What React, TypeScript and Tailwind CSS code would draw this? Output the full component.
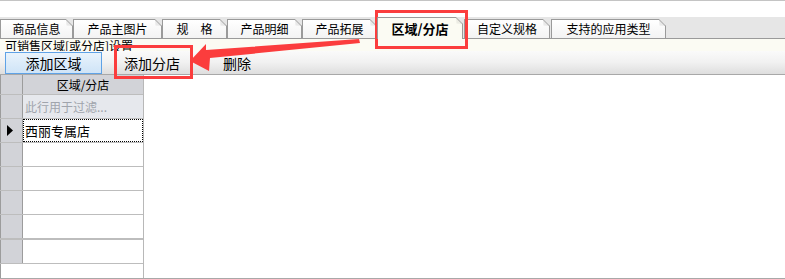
import React from "react";

const tabs: { label: string; w: string; ml: string; active?: boolean }[] = [
  { label: "商品信息", w: "w-[73px]", ml: "" },
  { label: "产品主图片", w: "w-[89px]", ml: "" },
  { label: "规　格", w: "w-[65px]", ml: "" },
  { label: "产品明细", w: "w-[75px]", ml: "" },
  { label: "产品拓展", w: "w-[75px]", ml: "" },
  { label: "区域/分店", w: "w-[86px]", ml: "", active: true },
  { label: "自定义规格", w: "w-[86px]", ml: "ml-px" },
  { label: "支持的应用类型", w: "w-[115px]", ml: "ml-px" },
];

function Fold({ active }: { active?: boolean }) {
  return (
    <svg
      className="absolute -top-px -right-px"
      width="7"
      height="7"
      viewBox="0 0 7 7"
    >
      <polygon points="0,0 7,0 7,7" fill="#e6e6e6" />
      <polygon points="0,0 0.5,6.5 7,7" fill={active ? "#ecece4" : "#e9e9e9"} />
      <line x1="0" y1="0.5" x2="6.5" y2="7" stroke="#9a9a9a" strokeWidth="1" />
    </svg>
  );
}

export default function App() {
  const font = { fontFamily: '"Noto Sans CJK SC", "Noto Sans", sans-serif' };
  const rows = [
    { h: "h-[24px] border-b", selected: true },
    { h: "h-[24px] border-b" },
    { h: "h-[24px] border-b" },
    { h: "h-[24px] border-b" },
    { h: "h-[25px] border-b-2" },
    { h: "h-[24px] border-b" },
  ];
  return (
    <div
      className="relative w-[785px] h-[279px] overflow-hidden bg-white text-black"
      style={font}
    >
      <div className="h-px bg-[#c4c4c4]" />
      <div className="h-[16px] bg-white" />
      {/* tab strip */}
      <div className="flex h-[22px] items-end border-b border-[#9a9a9a] bg-[#e6e6e6]">
        {tabs.map((t) =>
          t.active ? (
            <div
              key={t.label}
              className={`relative z-10 -mb-px flex h-[22px] items-center justify-center border-x border-t border-[#9a9a9a] bg-[#fbfbf3] text-[13px] font-bold leading-none ${t.w} ${t.ml}`}
            >
              <span className="-mt-[1px]">{t.label}</span>
              <Fold active />
            </div>
          ) : (
            <div
              key={t.label}
              className={`relative flex h-[19px] items-center justify-center border-x border-t border-[#9a9a9a] bg-gradient-to-b from-white to-[#f3f3f3] text-[12px] leading-none ${t.w} ${t.ml}`}
            >
              <span className="whitespace-pre">{t.label}</span>
              <Fold />
            </div>
          )
        )}
      </div>
      {/* label */}
      <div className="h-[12px] bg-[#fbfbf3] pl-[5px] text-[12px] leading-[13px]">
        可销售区域[或分店]设置
      </div>
      {/* toolbar */}
      <div className="relative flex h-[24px] items-start border-b border-[#a8a8a8] bg-gradient-to-b from-[#fafafa] via-[#f1f1f1] to-[#dedede] pt-px">
        <div className="ml-[5px] flex h-[22px] w-[97px] items-center justify-center border border-[#5fa2e6] bg-gradient-to-b from-[#e9f3fc] to-[#cfe4f7] text-[14px]">
          添加区域
        </div>
        <div className="flex h-[22px] w-[100px] items-center justify-center text-[14px]">
          添加分店
        </div>
        <div className="flex h-[22px] w-[70px] items-center justify-center text-[14px]">
          删除
        </div>
      </div>
      {/* grid */}
      <div className="flex">
        <div className="w-[144px] border-r border-[#b8b8b8]">
          <div className="flex h-[20px] border-b border-[#bdbdbd]">
            <div className="w-[23px] border-x border-[#9c9c9c] bg-[#d2d3d8]" />
            <div className="flex flex-1 items-center justify-center bg-[#d2d3d8] text-[12px]">
              区域/分店
            </div>
          </div>
          <div className="flex h-[24px] border-b border-[#bdbdbd]">
            <div className="w-[23px] border-x border-[#9c9c9c] bg-[#d2d3d8]" />
            <div className="flex flex-1 items-center bg-[#e6e8ed] pl-[2px] text-[12px] text-[#a0a4ac]">
              此行用于过滤...
            </div>
          </div>
          {rows.map((r, i) => (
            <div key={i} className={`flex border-[#bdbdbd] ${r.h}`}>
              <div className="flex w-[23px] items-center justify-center border-x border-[#9c9c9c] bg-[#d2d3d8]">
                {r.selected && (
                  <svg width="7" height="11" viewBox="0 0 7 11" className="ml-[-2px]">
                    <polygon points="0,0 6,5.5 0,11" fill="#000" />
                  </svg>
                )}
              </div>
              <div className="flex-1 bg-white">
                {r.selected && (
                  <div className="flex h-full items-center border border-dotted border-black pl-px text-[13px]">
                    西丽专属店
                  </div>
                )}
              </div>
            </div>
          ))}
          <div className="h-[14px] border-l border-[#9c9c9c]" />
        </div>
        <div className="flex-1" />
      </div>
      <div className="h-px bg-[#a8a8a8]" />

      {/* annotations */}
      <div className="pointer-events-none absolute left-[375px] top-[10px] h-[39px] w-[93px] border-[3px] border-[#fb3d3d]" />
      <div className="pointer-events-none absolute left-[114px] top-[45px] h-[34px] w-[79px] border-[3px] border-[#fb3d3d]" />
      <svg
        className="pointer-events-none absolute left-0 top-0"
        width="785"
        height="279"
        viewBox="0 0 785 279"
      >
        <polygon
          points="190,61 206,44 206,50 359,39 360,43 210,58 209,71"
          fill="#fb3d3d"
        />
      </svg>
    </div>
  );
}
